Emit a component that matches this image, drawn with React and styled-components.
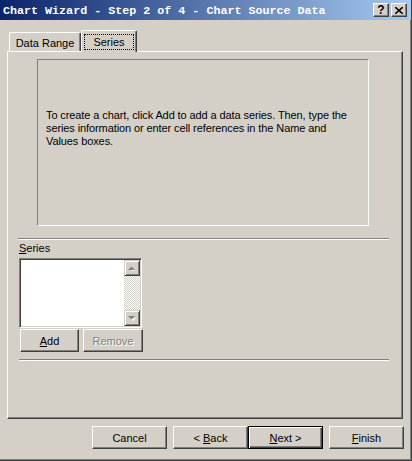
import React from "react";
import styled, { createGlobalStyle, css } from "styled-components";

const GlobalStyle = createGlobalStyle`
  html, body {
    margin: 0;
    padding: 0;
    background: #d4d0c8;
  }
  body {
    font-family: "Liberation Sans", Arial, sans-serif;
    font-size: 11px;
    color: #000;
  }
  * {
    box-sizing: border-box;
  }
`;

const raised = css`
  border: 1px solid;
  border-color: #fff #404040 #404040 #fff;
  box-shadow: inset -1px -1px #808080;
`;

const Window = styled.div`
  width: 412px;
  height: 461px;
  background: #d4d0c8;
  border-right: 1px solid #404040;
  border-bottom: 1px solid #404040;
  box-shadow: inset -1px -1px #808080;
  display: flex;
  flex-direction: column;
`;

const TitleBar = styled.div`
  height: 20px;
  display: flex;
  align-items: center;
  justify-content: space-between;
  padding: 0 4px 0 3px;
  background: linear-gradient(to right, #0a246a, #a6caf0);
`;

const Title = styled.span`
  font-family: "Liberation Mono", "DejaVu Sans Mono", monospace;
  font-weight: bold;
  font-size: 11.7px;
  color: #fff;
  white-space: nowrap;
  padding-top: 1px;
`;

const TitleButtons = styled.div`
  display: flex;
  gap: 2px;
`;

const TitleButton = styled.div`
  ${raised};
  width: 16px;
  height: 14px;
  background: #d4d0c8;
  display: flex;
  align-items: center;
  justify-content: center;
  font-weight: bold;
  font-size: 12px;
  line-height: 12px;
  color: #000;
`;

const TabRow = styled.div`
  display: flex;
  align-items: flex-end;
  height: 21px;
  margin: 10px 0 0 9px;
`;

const Tab = styled.div`
  position: relative;
  display: flex;
  justify-content: center;
  background: #d4d0c8;
  border: 1px solid;
  border-color: #fff #404040 transparent #fff;
  border-bottom: none;
  border-radius: 2px 2px 0 0;
  box-shadow: inset -1px 0 #808080;
  width: ${(p) => p.$width}px;
  height: ${(p) => (p.$active ? 22 : 19)}px;
  padding-top: ${(p) => (p.$active ? 3 : 4)}px;
  line-height: 13px;
  ${(p) =>
    p.$active &&
    css`
      margin-bottom: -1px;
      z-index: 1;
    `}
`;

const FocusLabel = styled.span`
  display: inline-block;
  height: 16px;
  padding: 1px 8px 0;
  border: 1px dotted #000;
  line-height: 13px;
`;

const Panel = styled.div`
  margin-left: 7px;
  width: 396px;
  height: 368px;
  border: 1px solid;
  border-color: #fff #404040 #404040 #fff;
  box-shadow: inset -1px -1px #808080;
  display: flex;
  flex-direction: column;
  align-items: flex-start;
`;

const PreviewBox = styled.div`
  margin: 7px 0 0 29px;
  width: 332px;
  height: 167px;
  border: 1px solid;
  border-color: #808080 #fff #fff #808080;
  padding: 49px 0 0 8px;
  line-height: 13px;
  letter-spacing: -0.1px;
  white-space: nowrap;
`;

const Separator = styled.div`
  margin: ${(p) => p.$top}px 0 0 ${(p) => p.$left}px;
  width: ${(p) => p.$width}px;
  height: 2px;
  border-top: 1px solid #808080;
  border-bottom: 1px solid #fff;
`;

const FieldLabel = styled.div`
  margin: 2px 0 0 11px;
  line-height: 13px;
`;

const ListBox = styled.div`
  margin: 3px 0 0 11px;
  width: 123px;
  height: 70px;
  padding: 1px;
  border: 1px solid;
  border-color: #808080 #fff #fff #808080;
  box-shadow: inset 1px 1px #404040, inset -1px -1px #d4d0c8;
  display: flex;
  background: #d4d0c8;
`;

const ListArea = styled.div`
  flex: 1;
  background: #fff;
`;

const ScrollBar = styled.div`
  width: 16px;
  display: flex;
  flex-direction: column;
`;

const ScrollButton = styled.div`
  width: 16px;
  height: 16px;
  background: #d4d0c8;
  border: 1px solid;
  border-color: #d4d0c8 #404040 #404040 #d4d0c8;
  box-shadow: inset 1px 1px #fff, inset -1px -1px #808080;
  display: flex;
  align-items: center;
  justify-content: center;
`;

const ScrollTrack = styled.div`
  flex: 1;
  background: repeating-conic-gradient(#fff 0 25%, #d4d0c8 0 50%) 0 0 / 2px 2px;
`;

const SmallButtons = styled.div`
  display: flex;
  gap: 4px;
  margin: 1px 0 0 12px;
`;

const Button = styled.button`
  ${raised};
  width: ${(p) => p.$width || 75}px;
  height: 23px;
  padding: 0;
  background: #d4d0c8;
  font-family: "Liberation Sans", Arial, sans-serif;
  font-size: 11px;
  color: #000;
  display: flex;
  align-items: center;
  justify-content: center;
  white-space: pre;
  ${(p) =>
    p.$default &&
    css`
      border: 1px solid #000;
      box-shadow: inset 1px 1px #fff, inset -1px -1px #404040,
        inset -2px -2px #808080;
    `}
  &:disabled {
    color: #808080;
    text-shadow: 1px 1px #fff;
  }
`;

const ButtonRow = styled.div`
  display: flex;
  justify-content: flex-end;
  gap: 6px;
  margin-top: 7px;
  padding-right: 7px;
`;

const NavPair = styled.div`
  display: flex;
`;

const Arrow = ({ up }) => (
  <svg width="8" height="5" viewBox="0 0 8 5">
    <path
      d={up ? "M1 5 L4 2 L7 5 Z" : "M1 1 L7 1 L4 4 Z"}
      fill="#fff"
      transform="translate(1 1)"
    />
    <path d={up ? "M0 4 L3.5 0.5 L7 4 Z" : "M0 0 L7 0 L3.5 3.5 Z"} fill="#808080" />
  </svg>
);

const CloseIcon = () => (
  <svg width="8" height="7" viewBox="0 0 8 7">
    <path d="M0 0 L8 7 M8 0 L0 7" stroke="#000" strokeWidth="1.6" />
  </svg>
);

export default function App() {
  return (
    <>
      <GlobalStyle />
      <Window>
        <TitleBar>
          <Title>Chart Wizard - Step 2 of 4 - Chart Source Data</Title>
          <TitleButtons>
            <TitleButton>?</TitleButton>
            <TitleButton>
              <CloseIcon />
            </TitleButton>
          </TitleButtons>
        </TitleBar>

        <TabRow>
          <Tab $width={72}>Data Range</Tab>
          <Tab $width={56} $active>
            <FocusLabel>Series</FocusLabel>
          </Tab>
        </TabRow>

        <Panel>
          <PreviewBox>
            To create a chart, click Add to add a data series. Then, type the
            <br />
            series information or enter cell references in the Name and
            <br />
            Values boxes.
          </PreviewBox>

          <Separator $top={12} $left={10} $width={371} />

          <FieldLabel>
            <u>S</u>eries
          </FieldLabel>
          <ListBox>
            <ListArea />
            <ScrollBar>
              <ScrollButton>
                <Arrow up />
              </ScrollButton>
              <ScrollTrack />
              <ScrollButton>
                <Arrow />
              </ScrollButton>
            </ScrollBar>
          </ListBox>

          <SmallButtons>
            <Button $width={59}>
              <span>
                <u>A</u>dd
              </span>
            </Button>
            <Button $width={60} disabled>
              Remove
            </Button>
          </SmallButtons>

          <Separator $top={7} $left={11} $width={370} />
        </Panel>

        <ButtonRow>
          <Button>Cancel</Button>
          <NavPair>
            <Button>
              <span>
                {"< "}
                <u>B</u>ack
              </span>
            </Button>
            <Button $default>
              <span>
                <u>N</u>
                {"ext >"}
              </span>
            </Button>
          </NavPair>
          <Button>
            <span>
              <u>F</u>inish
            </span>
          </Button>
        </ButtonRow>
      </Window>
    </>
  );
}
